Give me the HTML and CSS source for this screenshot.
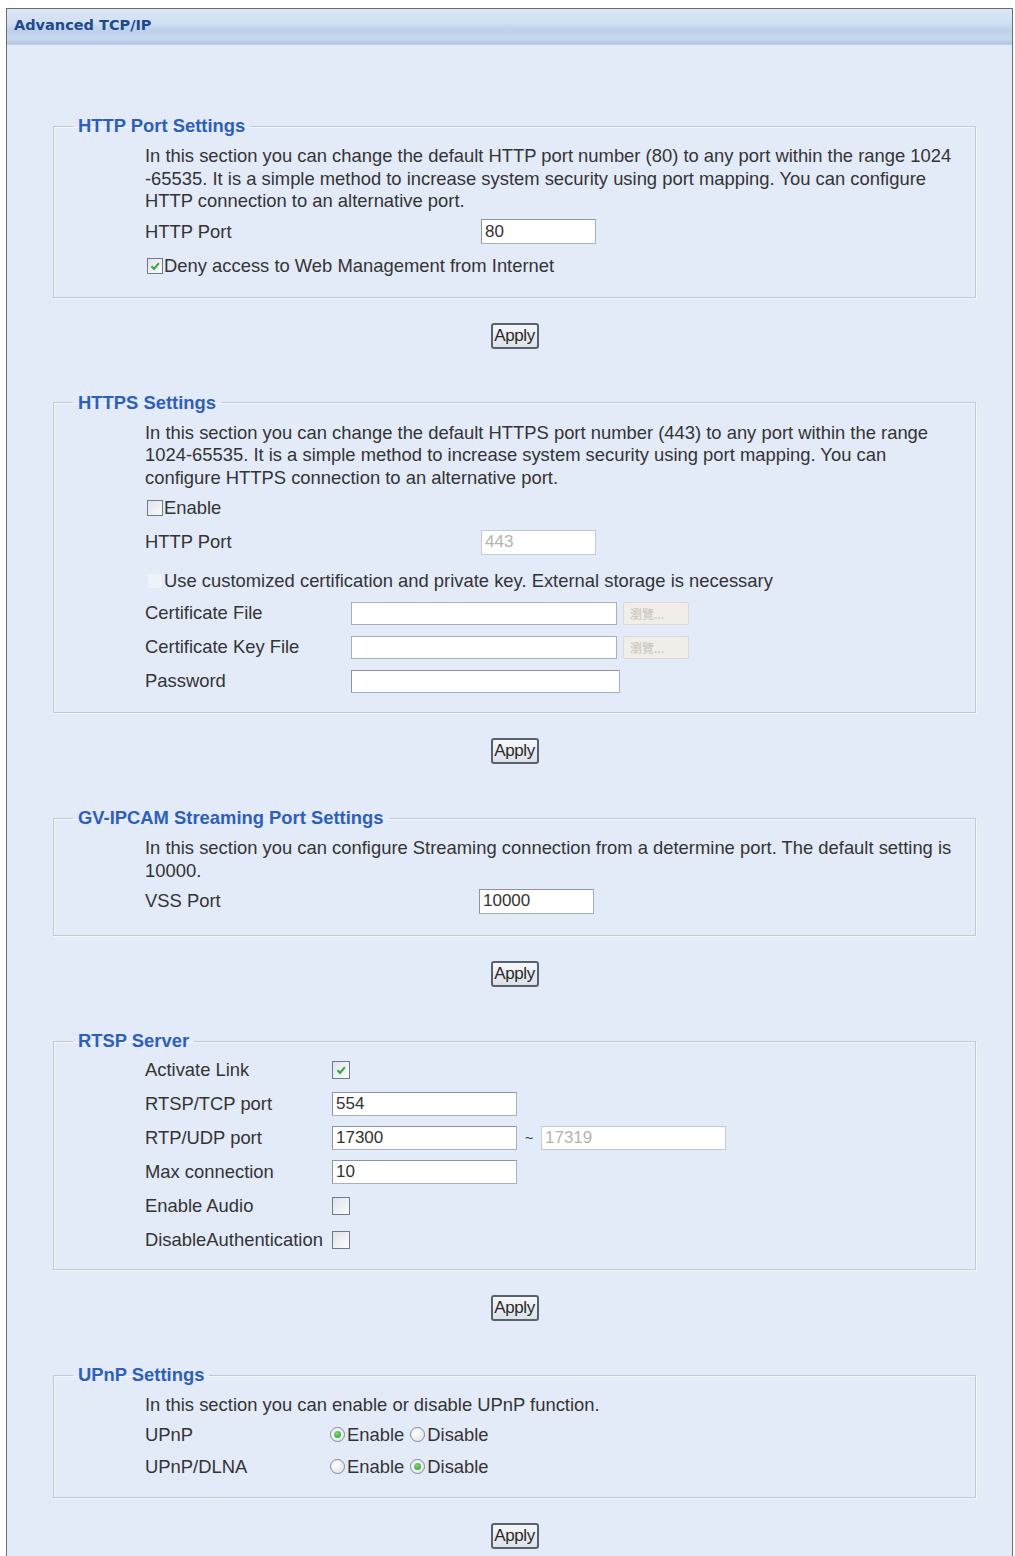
FILE: index.html
```html
<!doctype html>
<html lang="en">
<head>
    <meta charset="UTF-8" />
    <meta name="viewport" content="width=device-width, initial-scale=1.0" />
    <title>Advanced TCP/IP</title>
    <link rel="stylesheet" href="styles.css">
</head>
<body>
    <div class="window">
        <div class="titlebar">Advanced TCP/IP</div>
        <div class="content">

            <!-- HTTP port -->
            <fieldset class="group">
                <legend>HTTP Port Settings</legend>
                <div class="group-body">
                    <p class="desc">In this section you can change the default HTTP port number (80) to any port within the range 1024<br>-65535. It is a simple method to increase system security using port mapping. You can configure<br>HTTP connection to an alternative port.</p>
                    <div class="row">
                        <span class="label w-wide">HTTP Port</span>
                        <input type="text" class="field port" value="80">
                    </div>
                    <div class="row">
                        <span class="box checked"><svg viewBox="0 0 10 10"><path d="M2 5.2 L4.2 7.4 L8.2 2.6" /></svg></span>Deny access to Web Management from Internet
                    </div>
                </div>
            </fieldset>
            <div class="actions"><button class="apply">Apply</button></div>

            <!-- HTTPS -->
            <fieldset class="group">
                <legend>HTTPS Settings</legend>
                <div class="group-body">
                    <p class="desc">In this section you can change the default HTTPS port number (443) to any port within the range<br>1024-65535. It is a simple method to increase system security using port mapping. You can<br>configure HTTPS connection to an alternative port.</p>
                    <div class="row">
                        <span class="box"></span>Enable
                    </div>
                    <div class="row">
                        <span class="label w-wide">HTTP Port</span>
                        <input type="text" class="field port" value="443" disabled>
                    </div>
                    <div class="row tall">
                        <span class="box off"></span>Use customized certification and private key. External storage is necessary
                    </div>
                    <div class="row">
                        <span class="label w-cert">Certificate File</span>
                        <input type="text" class="field file" disabled>
                        <span class="browse">瀏覽...</span>
                    </div>
                    <div class="row">
                        <span class="label w-cert">Certificate Key File</span>
                        <input type="text" class="field file" disabled>
                        <span class="browse">瀏覽...</span>
                    </div>
                    <div class="row">
                        <span class="label w-cert">Password</span>
                        <input type="password" class="field pass">
                    </div>
                </div>
            </fieldset>
            <div class="actions"><button class="apply">Apply</button></div>

            <!-- streaming -->
            <fieldset class="group roomy">
                <legend>GV-IPCAM Streaming Port Settings</legend>
                <div class="group-body">
                    <p class="desc">In this section you can configure Streaming connection from a determine port. The default setting is<br>10000.</p>
                    <div class="row">
                        <span class="label w-vss">VSS Port</span>
                        <input type="text" class="field port" value="10000">
                    </div>
                </div>
            </fieldset>
            <div class="actions"><button class="apply">Apply</button></div>

            <!-- RTSP -->
            <fieldset class="group">
                <legend>RTSP Server</legend>
                <div class="group-body rows-only">
                    <div class="row">
                        <span class="label w-rtsp">Activate Link</span>
                        <span class="box big checked"><svg viewBox="0 0 10 10"><path d="M2 5.2 L4.2 7.4 L8.2 2.6" /></svg></span>
                    </div>
                    <div class="row">
                        <span class="label w-rtsp">RTSP/TCP port</span>
                        <input type="text" class="field mid" value="554">
                    </div>
                    <div class="row">
                        <span class="label w-rtsp">RTP/UDP port</span>
                        <input type="text" class="field mid" value="17300">
                        <span class="tilde">~</span>
                        <input type="text" class="field mid" value="17319" disabled>
                    </div>
                    <div class="row">
                        <span class="label w-rtsp">Max connection</span>
                        <input type="text" class="field mid" value="10">
                    </div>
                    <div class="row">
                        <span class="label w-rtsp">Enable Audio</span>
                        <span class="box big"></span>
                    </div>
                    <div class="row">
                        <span class="label w-rtsp">DisableAuthentication</span>
                        <span class="box big"></span>
                    </div>
                </div>
            </fieldset>
            <div class="actions"><button class="apply">Apply</button></div>

            <!-- UPnP -->
            <fieldset class="group">
                <legend>UPnP Settings</legend>
                <div class="group-body">
                    <p class="desc">In this section you can enable or disable UPnP function.</p>
                    <div class="row short">
                        <span class="label w-upnp">UPnP</span>
                        <span class="radio on"></span>Enable
                        <span class="radio gap"></span>Disable
                    </div>
                    <div class="row short">
                        <span class="label w-upnp">UPnP/DLNA</span>
                        <span class="radio"></span>Enable
                        <span class="radio on gap"></span>Disable
                    </div>
                </div>
            </fieldset>
            <div class="actions last"><button class="apply">Apply</button></div>

        </div>
    </div>
</body>
</html>
```

FILE: styles.css
```css
body {
    margin: 0;
    background-color: #ffffff;
    font-family: "Liberation Sans", Arial, sans-serif;
    color: #343434;
}

.window {
    margin: 8px 0 0 6px;
    width: 1005px;
    border: 1px solid #6a6d73;
    border-bottom: none;
    background-color: #e3eaf8;
    min-height: 1560px;
}

.titlebar {
    height: 35px;
    line-height: 33px;
    padding-left: 7px;
    font-family: "DejaVu Sans", Verdana, sans-serif;
    font-weight: bold;
    font-size: 14.5px;
    color: #1d4a8e;
    background: linear-gradient(#dce7f6 0%, #d0dff2 40%, #bcd0ea 62%, #c8daef 85%, #b0c5e1 100%);
    border-bottom: 1px solid #bccde4;
}

.content {
    padding-top: 70px;
}

/* section boxes */
.group {
    margin: 0 36px 0 46px;
    padding: 0 20px 14px 19px;
    border: 1px solid #c3c9d4;
    box-shadow: 1px 1px 0 #f3f6fc, inset 1px 1px 0 #f3f6fc;
    min-width: 0;
}

.group.roomy {
    padding-bottom: 17px;
}

.group legend {
    padding: 0 5px;
    font-size: 18.4px;
    line-height: 22px;
    font-weight: bold;
    color: #2d5fbe;
}

.group-body {
    padding: 8px 0 0 72px;
    font-size: 18.4px;
}

.group-body.rows-only {
    padding-top: 1px;
    margin-bottom: -2px;
}

.desc {
    margin: 0 0 2px 0;
    line-height: 22.5px;
    white-space: nowrap;
}

.row {
    height: 34px;
    display: flex;
    align-items: center;
    white-space: nowrap;
}

.row.tall {
    box-sizing: border-box;
    height: 37px;
    padding-top: 7px;
}

.row.short {
    height: 32px;
}

.label {
    flex: none;
}

.w-wide { width: 336px; }
.w-cert { width: 206px; }
.w-vss { width: 334px; }
.w-rtsp { width: 187px; }
.w-upnp { width: 185px; }

/* text inputs */
.field {
    box-sizing: border-box;
    height: 25px;
    padding: 0 3px;
    border: 1px solid #a9b0bc;
    border-top-color: #8d95a3;
    border-left-color: #8d95a3;
    background-color: #ffffff;
    font-family: "Liberation Sans", Arial, sans-serif;
    font-size: 17px;
    color: #333;
    outline: none;
}

.field:disabled {
    color: #b3b3b3;
    background-color: #ffffff;
    border-color: #c4cad4;
}

.field.port { width: 115px; }
.field.mid { width: 185px; height: 24px; }
.field.file { width: 266px; height: 23px; border-color: #a9b0bc; }
.field.pass { width: 269px; height: 23px; }

.browse {
    box-sizing: border-box;
    margin-left: 6px;
    width: 66px;
    height: 23px;
    line-height: 21px;
    padding-left: 6px;
    font-family: "Noto Sans CJK TC", sans-serif;
    font-size: 12px;
    color: #c7c3bd;
    background-color: #f1eee9;
    border: 1px solid #dcdad6;
    border-radius: 2px;
}

.tilde {
    width: 24px;
    text-align: center;
    font-size: 14px;
}

/* checkboxes and radios */
.box {
    box-sizing: border-box;
    width: 16px;
    height: 16px;
    margin: 0 1px 0 2px;
    border: 1px solid #6f7b8c;
    background: linear-gradient(135deg, #dfe3ea, #fbfcfd);
    display: inline-flex;
    align-items: center;
    justify-content: center;
}

.box.big {
    width: 18px;
    height: 18px;
    margin: 0;
}

.box.off {
    border-color: #e6ebf3;
    background: #eef2f9;
}

.box svg {
    width: 12px;
    height: 12px;
}

.box svg path {
    fill: none;
    stroke: #3aa83a;
    stroke-width: 1.8;
}

.radio {
    box-sizing: border-box;
    width: 15px;
    height: 15px;
    margin-right: 2px;
    border: 1px solid #7f8a9b;
    border-radius: 50%;
    background: radial-gradient(circle at 35% 35%, #fdfdfd, #dde2ea);
    position: relative;
}

.radio.gap {
    margin-left: 6px;
}

.radio.on::after {
    content: "";
    position: absolute;
    left: 3px;
    top: 3px;
    width: 7px;
    height: 7px;
    border-radius: 50%;
    background: radial-gradient(circle at 40% 35%, #7fdc6e, #2b9a2b);
}

/* apply buttons */
.actions {
    margin: 25px 36px 43px 46px;
    text-align: center;
}

.actions.last {
    margin-bottom: 20px;
}

.apply {
    box-sizing: border-box;
    width: 48px;
    height: 26px;
    padding: 0;
    border: 2px solid #56636f;
    border-radius: 3px;
    background: linear-gradient(#f6f7f9, #dde1e8);
    font-family: "Liberation Sans", Arial, sans-serif;
    font-size: 17px;
    letter-spacing: -0.4px;
    color: #2a2a2a;
}
```
